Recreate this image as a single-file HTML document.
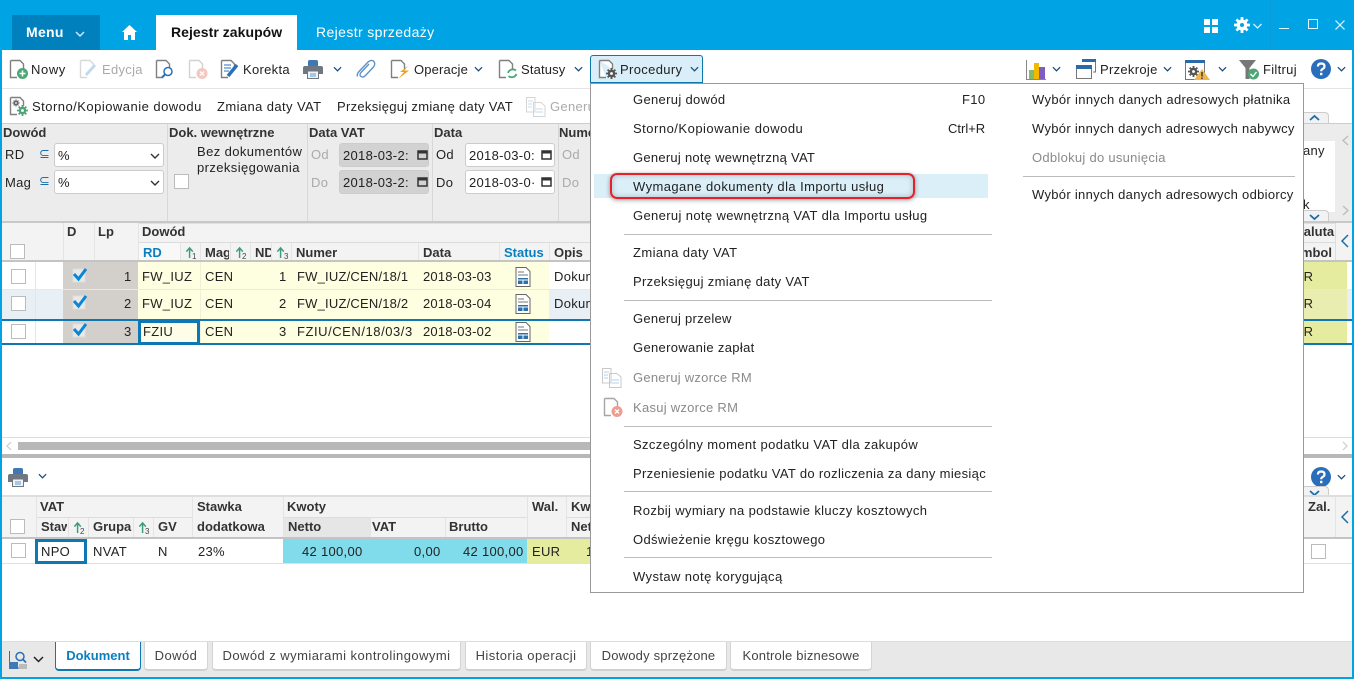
<!DOCTYPE html>
<html lang="pl"><head><meta charset="utf-8"><title>Rejestr zakupów</title>
<style>
html,body{margin:0;padding:0;width:1354px;height:679px;overflow:hidden;background:#fff}
body{position:relative;font:13px/16px "Liberation Sans",Arial,sans-serif;color:#222;letter-spacing:.3px}
.t{position:absolute;white-space:nowrap;font-style:normal;margin-top:1px}
.b{font-weight:bold;font-size:13px;color:#333;letter-spacing:0;margin-top:0}
.d{font-size:8px;line-height:8px;color:#444;letter-spacing:0;margin-top:0}
.g{color:#aaa}
.r{position:absolute;display:block}
.cb{position:absolute;width:13px;height:13px;border:1px solid #bbb;background:#fff}
svg{position:absolute;overflow:visible}
.sel{position:absolute;background:#fff;border:1px solid #ccc;border-radius:3px;box-sizing:border-box;width:110px;height:24px;padding:4px 3px;font-size:13px}
.date{position:absolute;border:1px solid #ccc;border-radius:3px;box-sizing:border-box;width:90px;height:24px;padding:4px 3px;overflow:hidden;white-space:nowrap;background:#fff}
.tab{position:absolute;top:642px;height:27px;background:#fff;border:1px solid #d4d4d4;border-top:0;border-bottom:2px solid #d0d0d0;border-radius:0 0 4px 4px;text-align:center;line-height:28px;color:#444;letter-spacing:.45px}
#menu .t{color:#222;letter-spacing:.33px}
#menu .sep{position:absolute;height:1px;background:#bbb}
.le{position:absolute;color:#1c6ea8;font-family:"DejaVu Sans",sans-serif;font-size:13px;letter-spacing:0}
</style></head><body>
<svg width="0" height="0" style="position:absolute"><defs>
<symbol id="doc" viewBox="0 0 20 20"><path d="M1.500 1.500H11L14.500 5V10M8 18.500H1.500V1.500" fill="#fff" stroke="#808080" stroke-width="1.400"/></symbol>
<symbol id="gear" viewBox="0 0 10 10"><path d="M5 0V10M0 5H10M1.500 1.500L8.500 8.500M8.500 1.500L1.500 8.500" stroke="currentColor" stroke-width="1.700"/><circle cx="5" cy="5" r="3.400" fill="currentColor"/><circle cx="5" cy="5" r="1.300" fill="#fff"/></symbol>
<symbol id="chev" viewBox="0 0 10 6"><path d="M1 1L5 5L9 1" fill="none" stroke="#1c4f80" stroke-width="1.400"/></symbol>
<symbol id="sort" viewBox="0 0 12 14"><path d="M5 13V3M1.500 6L5 2L8.500 6" fill="none" stroke="#3e9d76" stroke-width="1.600"/></symbol>
<symbol id="stat" viewBox="0 0 16 20"><path d="M1 .5H11L15 4.500V19.500H1Z" fill="#fff" stroke="#666"/><path d="M3 5H9M3 8H13" stroke="#777"/><path d="M3 11H13V17H3Z" fill="#2d6fa8"/><path d="M3 13H13M8 13V17" stroke="#fff"/></symbol>
<symbol id="check" viewBox="0 0 16 16"><path d="M1 2H13V15H1Z" fill="#e9e9e9" stroke="#ddd"/><path d="M2 7L6.500 12L14 2" fill="none" stroke="#0a86d6" stroke-width="3"/></symbol>
<symbol id="print" viewBox="0 0 20 20"><path d="M5 8V2.500Q5 1 7 1H13Q15 1 15 2.500V8Z" fill="#3f78b5"/><path d="M2 7H18Q20 7 20 9V15H16V13H4V15H0V9Q0 7 2 7Z" fill="#6f7880"/><path d="M4.500 12H15.500V19.500H4.500Z" fill="#eef4fa" stroke="#6f7880"/><path d="M7 15H13M7 17H13" stroke="#5d9bd0"/></symbol>
<symbol id="help" viewBox="0 0 20 20"><circle cx="10" cy="10" r="10" fill="#2a6ebb"/><path d="M6.800 7.500Q7 4.500 10.200 4.500Q13.500 4.600 13.500 7.200Q13.500 9 11.500 10Q10.200 10.800 10.200 12.300" fill="none" stroke="#fff" stroke-width="2.200"/><rect x="9" y="13.800" width="2.400" height="2.400" fill="#fff"/></symbol>
</defs></svg>

<!-- header -->
<div class="r" style="left:0;top:0;width:1354px;height:50px;background:#00a4e4"></div>
<div class="r" style="left:0;top:0;width:2px;height:679px;background:#00a4e4;z-index:9"></div>
<div class="r" style="left:1352px;top:0;width:2px;height:679px;background:#00a4e4;z-index:9"></div>
<div class="r" style="left:0;top:677px;width:1354px;height:2px;background:#00a4e4;z-index:9"></div>
<div class="r" style="left:12px;top:15px;width:88px;height:35px;background:#0080bd"></div>
<i class="t" style="left:26px;top:23px;color:#fff;font-weight:bold;font-size:14px">Menu</i>
<svg style="left:75px;top:31px" width="10" height="6"><path d="M1 1L5 5L9 1" fill="none" stroke="#cfe8f5" stroke-width="1.500"/></svg>
<svg style="left:122px;top:25px" width="15" height="15"><path d="M7.500 0L15 7H13V15H9V10H6V15H2V7H0Z" fill="#fff"/></svg>
<div class="r" style="left:156px;top:15px;width:141px;height:35px;background:#fff"></div>
<i class="t" style="left:171px;top:23px;font-weight:bold;font-size:14px;color:#111;letter-spacing:.05px">Rejestr zakupów</i>
<i class="t" style="left:316px;top:23px;color:#fff;font-size:14px;letter-spacing:.38px">Rejestr sprzedaży</i>
<svg style="left:1204px;top:19px" width="14" height="14"><path d="M0 0H6V6H0ZM8 0H14V6H8ZM0 8H6V14H0ZM8 8H14V14H8Z" fill="#fff"/></svg>
<svg style="left:1234px;top:17px;color:#fff" width="16" height="16"><use href="#gear" width="16" height="16"/><circle cx="8" cy="8" r="2" fill="#00a4e4"/></svg>
<svg style="left:1253px;top:23px" width="9" height="6"><path d="M.5 1L4.500 5L8.500 1" fill="none" stroke="#d5eefa" stroke-width="1.300"/></svg>
<div class="r" style="left:1270px;top:0;width:1px;height:50px;background:#0a9ad6"></div>
<div class="r" style="left:1279px;top:28px;width:10px;height:1px;background:#e6f6fd"></div>
<div class="r" style="left:1308px;top:19px;width:8px;height:8px;border:1px solid #e6f6fd"></div>
<svg style="left:1335px;top:20px" width="10" height="10"><path d="M.5 .5L9.500 9.500M9.500 .5L.5 9.500" stroke="#e6f6fd" stroke-width="1.200"/></svg>

<!-- toolbar 1 -->
<div class="r" style="left:2px;top:88px;width:1350px;height:1px;background:#e4e4e4"></div>
<svg style="left:9px;top:59px" width="20" height="20"><use href="#doc" width="20" height="20"/><circle cx="13.500" cy="14.500" r="5.500" fill="#4ea677"/><path d="M13.500 11.500V17.500M10.500 14.500H16.500" stroke="#fff" stroke-width="1.500"/></svg>
<i class="t" style="left:31px;top:61px;letter-spacing:.6px">Nowy</i>
<svg style="left:79px;top:59px;opacity:.3" width="20" height="20"><use href="#doc" width="20" height="20"/><path d="M7 16L16 6" stroke="#3f85c8" stroke-width="3"/></svg>
<i class="t g" style="left:102px;top:61px">Edycja</i>
<svg style="left:155px;top:59px" width="20" height="20"><use href="#doc" width="20" height="20"/><circle cx="13" cy="12.500" r="4" fill="#fff" stroke="#2a70b8" stroke-width="1.500"/><path d="M10 15.500L7 18.500" stroke="#2a70b8" stroke-width="2"/></svg>
<svg style="left:188px;top:59px;opacity:.35" width="20" height="20"><use href="#doc" width="20" height="20"/><circle cx="14" cy="14.500" r="5.500" fill="#e2604e"/><path d="M12 12.500L16 16.500M16 12.500L12 16.500" stroke="#fff" stroke-width="1.300"/></svg>
<svg style="left:220px;top:59px" width="20" height="20"><use href="#doc" width="20" height="20"/><path d="M4 6H11M4 9H11M4 12H9" stroke="#2a70b8"/><path d="M8 17L17 6" stroke="#2a70b8" stroke-width="3.400"/></svg>
<i class="t" style="left:243px;top:61px">Korekta</i>
<svg style="left:303px;top:59px" width="20" height="20"><use href="#print" width="20" height="20"/></svg>
<svg style="left:333px;top:66px" width="9" height="6"><use href="#chev" width="9" height="6"/></svg>
<svg style="left:356px;top:59px" width="20" height="20" viewBox="0 0 20 20"><path d="M13 5L5 13.500Q3 16 5 17.500Q7 19 9.500 16.500L17.500 8Q20 4.500 17.500 2Q15 .5 12 3L3 12.500Q.5 15.500 1.500 17.500" fill="none" stroke="#5c93c9" stroke-width="1.400"/></svg>
<svg style="left:390px;top:59px" width="20" height="20"><use href="#doc" width="20" height="20"/><path d="M18 7L10 13H14L8 20L19 11.500H14.500Z" fill="#f0a020"/></svg>
<i class="t" style="left:414px;top:61px;letter-spacing:.15px">Operacje</i>
<svg style="left:474px;top:66px" width="9" height="6"><use href="#chev" width="9" height="6"/></svg>
<svg style="left:498px;top:59px" width="20" height="20"><use href="#doc" width="20" height="20"/><path d="M10 14A5 5 0 0 1 18 11.500M18.500 15A5 5 0 0 1 10.500 17" fill="none" stroke="#4ea677" stroke-width="1.800"/></svg>
<i class="t" style="left:521px;top:61px;letter-spacing:.15px">Statusy</i>
<svg style="left:574px;top:66px" width="9" height="6"><use href="#chev" width="9" height="6"/></svg>
<div class="r" style="left:590px;top:55px;width:111px;height:26px;background:#d9eef8;border:1px solid #0d78ac;border-radius:3px 3px 0 0;z-index:6"></div>
<svg style="left:598px;top:59px;z-index:7;color:#555" width="20" height="20"><use href="#doc" width="20" height="20"/><use href="#gear" x="8" y="9" width="11" height="11"/></svg>
<i class="t" style="left:620px;top:61px;z-index:7;letter-spacing:.35px">Procedury</i>
<svg style="left:690px;top:66px;z-index:7" width="9" height="6"><use href="#chev" width="9" height="6"/></svg>

<svg style="left:1026px;top:60px" width="20" height="20"><path d="M.5 0V19.500H20" fill="none" stroke="#888"/><path d="M3 10H8V19H3Z" fill="#7fbc6d"/><path d="M8 3H13V19H8Z" fill="#f5b800"/><path d="M13 7H19V19H13Z" fill="#7d5cc4"/></svg>
<svg style="left:1052px;top:66px" width="9" height="6"><use href="#chev" width="9" height="6"/></svg>
<svg style="left:1076px;top:59px" width="20" height="20"><path d="M6 .5H19.500V13H17" fill="#fff" stroke="#777"/><path d="M6 0H20V3H6Z" fill="#2a6aa8"/><path d="M.5 6.500H15.500V19.500H.5Z" fill="#fff" stroke="#777"/><path d="M0 6H16V10H0Z" fill="#2a6aa8"/></svg>
<i class="t" style="left:1100px;top:61px">Przekroje</i>
<svg style="left:1163px;top:66px" width="9" height="6"><use href="#chev" width="9" height="6"/></svg>
<svg style="left:1185px;top:60px;color:#555" width="25" height="21"><path d="M.5 .5H19.500V19.500H.5Z" fill="#fff" stroke="#777"/><path d="M0 0H20V3H0Z" fill="#2a6aa8"/><use href="#gear" x="3" y="6" width="11" height="11"/><path d="M17 9L25 20H9Z" fill="#f0b64c"/><path d="M17 12V16.500M17 17.500V19" stroke="#333" stroke-width="1.400"/></svg>
<svg style="left:1218px;top:66px" width="9" height="6"><use href="#chev" width="9" height="6"/></svg>
<svg style="left:1239px;top:60px" width="21" height="20"><path d="M0 0H17L10.500 8V19H6.500V8Z" fill="#777"/><circle cx="14.500" cy="14" r="5.500" fill="#4ea677"/><path d="M11.500 14L14 16.500L17.500 12" fill="none" stroke="#fff" stroke-width="1.400"/></svg>
<i class="t" style="left:1263px;top:61px">Filtruj</i>
<svg style="left:1311px;top:59px" width="20" height="20"><use href="#help" width="20" height="20"/></svg>
<svg style="left:1337px;top:66px" width="9" height="6"><use href="#chev" width="9" height="6"/></svg>

<!-- toolbar 2 -->
<svg style="left:9px;top:96px" width="20" height="20"><use href="#doc" width="20" height="20"/><use href="#gear" x="3.500" y="3.500" width="7" height="7" style="color:#666"/><use href="#gear" x="8" y="9" width="11" height="11" style="color:#4ea677"/></svg>
<i class="t" style="left:32px;top:98px;letter-spacing:.48px">Storno/Kopiowanie dowodu</i>
<i class="t" style="left:217px;top:98px;letter-spacing:.4px">Zmiana daty VAT</i>
<i class="t" style="left:337px;top:98px">Przeksięguj zmianę daty VAT</i>
<svg style="left:526px;top:97px;opacity:.35" width="20" height="20"><path d="M.5 .5H9V15H.5ZM7.500 5.500H15L19 9V19.500H7.500Z" fill="#fff" stroke="#888"/><path d="M2 4H7M2 7H6M2 10H6M10 12H17M10 15H17" stroke="#5d9bd0"/></svg>
<i class="t g" style="left:550px;top:98px">Generuj</i>

<!-- filter panel -->
<div class="r" style="left:2px;top:123px;width:1350px;height:99px;background:#ececec;border-top:1px solid #ccc;box-sizing:border-box"></div>
<div class="r" style="left:2px;top:221px;width:1350px;height:2px;background:#c8c8c8"></div>
<div class="r" style="left:167px;top:124px;width:1px;height:97px;background:#d8d8d8"></div>
<div class="r" style="left:307px;top:124px;width:1px;height:97px;background:#d8d8d8"></div>
<div class="r" style="left:432px;top:124px;width:1px;height:97px;background:#d8d8d8"></div>
<div class="r" style="left:558px;top:124px;width:1px;height:97px;background:#d8d8d8"></div>
<i class="t b" style="left:3px;top:125px">Dowód</i>
<i class="t b" style="left:169px;top:125px">Dok. wewnętrzne</i>
<i class="t b" style="left:309px;top:125px">Data VAT</i>
<i class="t b" style="left:434px;top:125px">Data</i>
<i class="t b" style="left:559px;top:125px">Numer</i>
<i class="t" style="left:5px;top:146px">RD</i><i class="t le" style="left:39px;top:146px">⊆</i>
<i class="t" style="left:5px;top:174px">Mag</i><i class="t le" style="left:39px;top:173px">⊆</i>
<div class="sel" style="left:54px;top:143px">%</div><div class="sel" style="left:54px;top:170px">%</div>
<svg style="left:150px;top:153px" width="10" height="6"><path d="M1 1L5 5L9 1" fill="none" stroke="#333" stroke-width="1.400"/></svg>
<svg style="left:150px;top:180px" width="10" height="6"><path d="M1 1L5 5L9 1" fill="none" stroke="#333" stroke-width="1.400"/></svg>
<i class="t" style="left:197px;top:143px;letter-spacing:.4px">Bez dokumentów</i><i class="t" style="left:197px;top:159px;letter-spacing:.4px">przeksięgowania</i>
<div class="cb" style="left:174px;top:174px"></div>
<i class="t g" style="left:311px;top:146px">Od</i><i class="t g" style="left:311px;top:174px">Do</i>
<div class="date" style="left:339px;top:143px;background:#d2d2d2">2018-03-2:</div>
<div class="date" style="left:339px;top:170px;background:#d2d2d2">2018-03-2:</div>
<i class="t" style="left:436px;top:146px">Od</i><i class="t" style="left:436px;top:174px">Do</i>
<div class="date" style="left:465px;top:143px">2018-03-0:</div>
<div class="date" style="left:465px;top:170px">2018-03-0·</div>
<svg style="left:417px;top:149px" width="11" height="11"><path d="M1 2H10V10H1Z" fill="none" stroke="#333" stroke-width="1.500"/><path d="M1 3.500H10" stroke="#333" stroke-width="2"/></svg>
<svg style="left:417px;top:176px" width="11" height="11"><path d="M1 2H10V10H1Z" fill="none" stroke="#333" stroke-width="1.500"/><path d="M1 3.500H10" stroke="#333" stroke-width="2"/></svg>
<svg style="left:541px;top:149px" width="11" height="11"><path d="M1 2H10V10H1Z" fill="none" stroke="#333" stroke-width="1.500"/><path d="M1 3.500H10" stroke="#333" stroke-width="2"/></svg>
<svg style="left:541px;top:176px" width="11" height="11"><path d="M1 2H10V10H1Z" fill="none" stroke="#333" stroke-width="1.500"/><path d="M1 3.500H10" stroke="#333" stroke-width="2"/></svg>
<i class="t g" style="left:562px;top:146px">Od</i><i class="t g" style="left:562px;top:174px">Do</i>

<!-- right side panel -->
<div class="r" style="left:1303px;top:112px;width:26px;height:11px;background:#f2f2f2;border:1px solid #ccc;border-bottom:0;border-radius:0 4px 0 0;box-sizing:border-box"></div>
<svg style="left:1309px;top:115px" width="11" height="6"><path d="M1 5L5.500 1L10 5" fill="none" stroke="#1c6ea8" stroke-width="1.800"/></svg>
<div class="r" style="left:1303px;top:141px;width:32px;height:71px;background:#fff"></div>
<div class="r" style="left:1335px;top:130px;width:17px;height:91px;background:#ececec"></div>
<svg style="left:1342px;top:135px" width="7" height="11"><path d="M6 1L1 5.500L6 10" fill="none" stroke="#bbb" stroke-width="1.300"/></svg>
<svg style="left:1342px;top:205px" width="7" height="11"><path d="M1 1L6 5.500L1 10" fill="none" stroke="#bbb" stroke-width="1.300"/></svg>
<i class="t" style="left:1303px;top:142px">any</i><i class="t" style="left:1303px;top:196px">k</i>
<div class="r" style="left:1303px;top:210px;width:26px;height:11px;background:#f2f2f2;border:1px solid #ccc;border-bottom:0;border-radius:0 4px 0 0;box-sizing:border-box"></div>
<svg style="left:1309px;top:214px" width="11" height="6"><path d="M1 1L5.500 5L10 1" fill="none" stroke="#1c6ea8" stroke-width="1.800"/></svg>

<!-- top grid -->
<div class="r" style="left:2px;top:223px;width:1350px;height:37px;background:#f3f3f3"></div>
<div class="r" style="left:138px;top:223px;width:1197px;height:1px;background:#e0e0e0"></div>
<div class="r" style="left:138px;top:242px;width:1197px;height:1px;background:#dcdcdc"></div>
<div class="r" style="left:2px;top:260px;width:1350px;height:2px;background:#c4c4c4"></div>
<div class="r" style="left:138px;top:243px;width:42px;height:17px;background:#f8f8f8"></div>
<div class="r" style="left:63px;top:223px;width:1px;height:37px;background:#e4e4e4"></div>
<div class="r" style="left:94px;top:223px;width:1px;height:37px;background:#e4e4e4"></div>
<div class="r" style="left:138px;top:223px;width:1px;height:37px;background:#e4e4e4"></div>
<div class="r" style="left:180px;top:243px;width:1px;height:17px;background:#e4e4e4"></div>
<div class="r" style="left:200px;top:243px;width:1px;height:17px;background:#e4e4e4"></div>
<div class="r" style="left:230px;top:243px;width:1px;height:17px;background:#e4e4e4"></div>
<div class="r" style="left:250px;top:243px;width:1px;height:17px;background:#e4e4e4"></div>
<div class="r" style="left:271px;top:243px;width:1px;height:17px;background:#e4e4e4"></div>
<div class="r" style="left:291px;top:243px;width:1px;height:17px;background:#e4e4e4"></div>
<div class="r" style="left:418px;top:243px;width:1px;height:17px;background:#e4e4e4"></div>
<div class="r" style="left:499px;top:243px;width:1px;height:17px;background:#e4e4e4"></div>
<div class="r" style="left:549px;top:243px;width:1px;height:17px;background:#e4e4e4"></div>
<div class="cb" style="left:10px;top:244px"></div>
<i class="t b" style="left:67px;top:224px">D</i><i class="t b" style="left:98px;top:224px">Lp</i><i class="t b" style="left:142px;top:224px">Dowód</i>
<i class="t b" style="left:143px;top:245px;color:#0a7fc0">RD</i>
<i class="t b" style="left:205px;top:245px;width:24px;overflow:hidden">Mag</i>
<i class="t b" style="left:255px;top:245px;width:16px;overflow:hidden">ND</i>
<i class="t b" style="left:296px;top:245px">Numer</i><i class="t b" style="left:423px;top:245px">Data</i>
<i class="t b" style="left:504px;top:245px;color:#0a7fc0">Status</i><i class="t b" style="left:554px;top:245px">Opis</i>
<svg style="left:185px;top:246px" width="11" height="13"><use href="#sort" width="11" height="13"/></svg>
<svg style="left:235px;top:246px" width="11" height="13"><use href="#sort" width="11" height="13"/></svg>
<svg style="left:276px;top:246px" width="11" height="13"><use href="#sort" width="11" height="13"/></svg>
<i class="t d" style="left:192px;top:253px">1</i><i class="t d" style="left:242px;top:253px">2</i><i class="t d" style="left:284px;top:253px">3</i>

<!-- rows -->
<div class="r" style="left:2px;top:290px;width:1350px;height:29px;background:#e9f0f5"></div>
<div class="r" style="left:63px;top:262px;width:75px;height:83px;background:#d3d0cb"></div>
<div class="r" style="left:138px;top:262px;width:411px;height:83px;background:#fefee0"></div>
<div class="r" style="left:1303px;top:262px;width:44px;height:83px;background:#e6ec9f"></div>
<div class="r" style="left:1303px;top:290px;width:44px;height:29px;background:#e9eeb0"></div>
<div class="r" style="left:2px;top:289px;width:1350px;height:1px;background:#e8e8e8"></div>
<div class="r" style="left:35px;top:262px;width:1px;height:83px;background:#dbe9f5"></div>
<div class="r" style="left:200px;top:262px;width:1px;height:83px;background:#f0f0d8"></div>
<div class="r" style="left:2px;top:319px;width:1350px;height:2px;background:#0d78b4"></div>
<div class="r" style="left:2px;top:343px;width:1350px;height:2px;background:#0d78b4"></div>
<div class="r" style="left:138px;top:320px;width:62px;height:25px;border:3px solid #0d78b4;box-sizing:border-box;background:#fefee8"></div>
<div class="cb" style="left:11px;top:269px"></div><div class="cb" style="left:11px;top:296px"></div><div class="cb" style="left:11px;top:324px"></div>
<svg style="left:72px;top:267px" width="16" height="16"><use href="#check" width="16" height="16"/></svg>
<svg style="left:72px;top:294px" width="16" height="16"><use href="#check" width="16" height="16"/></svg>
<svg style="left:72px;top:322px" width="16" height="16"><use href="#check" width="16" height="16"/></svg>
<i class="t" style="left:124px;top:268px">1</i><i class="t" style="left:124px;top:295px">2</i><i class="t" style="left:124px;top:323px">3</i>
<i class="t" style="left:142px;top:268px">FW_IUZ</i><i class="t" style="left:142px;top:295px">FW_IUZ</i><i class="t" style="left:143px;top:323px">FZIU</i>
<i class="t" style="left:205px;top:268px">CEN</i><i class="t" style="left:205px;top:295px">CEN</i><i class="t" style="left:205px;top:323px">CEN</i>
<i class="t" style="left:279px;top:268px">1</i><i class="t" style="left:279px;top:295px">2</i><i class="t" style="left:279px;top:323px">3</i>
<i class="t" style="left:297px;top:268px;letter-spacing:.2px">FW_IUZ/CEN/18/1</i><i class="t" style="left:297px;top:295px;letter-spacing:.2px">FW_IUZ/CEN/18/2</i><i class="t" style="left:297px;top:323px;letter-spacing:.55px">FZIU/CEN/18/03/3</i>
<i class="t" style="left:423px;top:268px;letter-spacing:.2px">2018-03-03</i><i class="t" style="left:423px;top:295px;letter-spacing:.2px">2018-03-04</i><i class="t" style="left:423px;top:323px;letter-spacing:.2px">2018-03-02</i>
<svg style="left:515px;top:267px" width="16" height="20"><use href="#stat" width="16" height="20"/></svg>
<svg style="left:515px;top:294px" width="16" height="20"><use href="#stat" width="16" height="20"/></svg>
<svg style="left:515px;top:322px" width="16" height="20"><use href="#stat" width="16" height="20"/></svg>
<i class="t" style="left:554px;top:268px">Dokument</i><i class="t" style="left:554px;top:295px">Dokument</i>
<i class="t b" style="left:1292px;top:224px">Waluta</i><i class="t b" style="left:1285px;top:245px">Symbol</i>
<i class="t" style="left:1285px;top:268px">EUR</i><i class="t" style="left:1285px;top:295px">EUR</i><i class="t" style="left:1285px;top:323px">EUR</i>
<div class="r" style="left:1335px;top:223px;width:17px;height:37px;background:#f3f3f3;border-left:1px solid #ddd;box-sizing:border-box"></div>
<svg style="left:1341px;top:234px" width="8" height="14"><path d="M7 1L1 7L7 13" fill="none" stroke="#1c6ea8" stroke-width="1.500"/></svg>

<!-- scrollbar + splitter -->
<div class="r" style="left:2px;top:437px;width:1350px;height:1px;background:#ddd"></div>
<svg style="left:6px;top:441px" width="6" height="10"><path d="M5 1L1 5L5 9" fill="none" stroke="#ccc" stroke-width="1.200"/></svg>
<div class="r" style="left:18px;top:442px;width:600px;height:8px;background:#b8b8b8"></div>
<svg style="left:1342px;top:441px" width="6" height="10"><path d="M1 1L5 5L1 9" fill="none" stroke="#ccc" stroke-width="1.200"/></svg>
<div class="r" style="left:2px;top:454px;width:1350px;height:4px;background:#b8b8b8"></div>
<svg style="left:8px;top:467px" width="20" height="20"><use href="#print" width="20" height="20"/></svg>
<svg style="left:38px;top:473px" width="9" height="6"><use href="#chev" width="9" height="6"/></svg>
<svg style="left:1311px;top:467px" width="20" height="20"><use href="#help" width="20" height="20"/></svg>
<svg style="left:1337px;top:474px" width="9" height="6"><use href="#chev" width="9" height="6"/></svg>
<div class="r" style="left:1303px;top:486px;width:26px;height:11px;background:#f2f2f2;border:1px solid #ccc;border-bottom:0;border-radius:0 4px 0 0;box-sizing:border-box"></div>
<svg style="left:1309px;top:490px" width="11" height="6"><path d="M1 1L5.500 5L10 1" fill="none" stroke="#1c6ea8" stroke-width="1.800"/></svg>

<!-- lower grid -->
<div class="r" style="left:2px;top:495px;width:1350px;height:2px;background:#dedede"></div>
<div class="r" style="left:2px;top:497px;width:1350px;height:40px;background:#f3f3f3"></div>
<div class="r" style="left:283px;top:518px;width:87px;height:19px;background:#e6e6e6"></div>
<div class="r" style="left:36px;top:517px;width:156px;height:1px;background:#ddd"></div>
<div class="r" style="left:283px;top:517px;width:244px;height:1px;background:#ddd"></div>
<div class="r" style="left:566px;top:517px;width:40px;height:1px;background:#ddd"></div>
<div class="r" style="left:2px;top:537px;width:1350px;height:2px;background:#c4c4c4"></div>
<div class="r" style="left:36px;top:497px;width:1px;height:40px;background:#e4e4e4"></div>
<div class="r" style="left:192px;top:497px;width:1px;height:40px;background:#e4e4e4"></div>
<div class="r" style="left:283px;top:497px;width:1px;height:40px;background:#e4e4e4"></div>
<div class="r" style="left:527px;top:497px;width:1px;height:40px;background:#e4e4e4"></div>
<div class="r" style="left:566px;top:497px;width:1px;height:40px;background:#e4e4e4"></div>
<div class="r" style="left:68px;top:518px;width:1px;height:19px;background:#e4e4e4"></div>
<div class="r" style="left:88px;top:518px;width:1px;height:19px;background:#e4e4e4"></div>
<div class="r" style="left:133px;top:518px;width:1px;height:19px;background:#e4e4e4"></div>
<div class="r" style="left:153px;top:518px;width:1px;height:19px;background:#e4e4e4"></div>
<div class="r" style="left:370px;top:518px;width:1px;height:19px;background:#e4e4e4"></div>
<div class="r" style="left:445px;top:518px;width:1px;height:19px;background:#e4e4e4"></div>
<div class="r" style="left:1335px;top:497px;width:1px;height:40px;background:#e4e4e4"></div>
<div class="cb" style="left:10px;top:519px"></div>
<i class="t b" style="left:40px;top:499px">VAT</i><i class="t b" style="left:197px;top:499px">Stawka</i><i class="t b" style="left:287px;top:499px">Kwoty</i><i class="t b" style="left:532px;top:499px">Wal.</i><i class="t b" style="left:571px;top:499px">Kwoty</i><i class="t b" style="left:1308px;top:499px">Zal.</i>
<i class="t b" style="left:41px;top:519px;width:26px;overflow:hidden">Stawka</i><i class="t b" style="left:93px;top:519px">Grupa</i><i class="t b" style="left:158px;top:519px">GV</i><i class="t b" style="left:197px;top:519px">dodatkowa</i><i class="t b" style="left:288px;top:519px">Netto</i><i class="t b" style="left:372px;top:519px">VAT</i><i class="t b" style="left:449px;top:519px">Brutto</i><i class="t b" style="left:571px;top:519px">Netto</i>
<svg style="left:73px;top:521px" width="11" height="13"><use href="#sort" width="11" height="13"/></svg>
<svg style="left:138px;top:521px" width="11" height="13"><use href="#sort" width="11" height="13"/></svg>
<i class="t d" style="left:80px;top:528px">2</i><i class="t d" style="left:145px;top:528px">3</i>
<svg style="left:1341px;top:510px" width="8" height="14"><path d="M7 1L1 7L7 13" fill="none" stroke="#1c6ea8" stroke-width="1.500"/></svg>
<div class="r" style="left:283px;top:539px;width:244px;height:25px;background:#80dcea"></div>
<div class="r" style="left:527px;top:539px;width:64px;height:25px;background:#e6ec9f"></div>
<div class="r" style="left:2px;top:563px;width:1350px;height:1px;background:#e0e0e0"></div>
<div class="r" style="left:35px;top:539px;width:52px;height:25px;border:3px solid #0d78b4;box-sizing:border-box;background:#fff"></div>
<div class="cb" style="left:11px;top:543px"></div><div class="cb" style="left:1311px;top:544px"></div>
<i class="t" style="left:41px;top:543px">NPO</i><i class="t" style="left:93px;top:543px">NVAT</i><i class="t" style="left:158px;top:543px">N</i><i class="t" style="left:198px;top:543px">23%</i>
<i class="t" style="left:302px;top:543px">42 100,00</i><i class="t" style="left:414px;top:543px">0,00</i><i class="t" style="left:463px;top:543px">42 100,00</i><i class="t" style="left:532px;top:543px">EUR</i><i class="t" style="left:586px;top:543px">1</i>

<!-- bottom -->
<div class="r" style="left:2px;top:641px;width:1350px;height:36px;background:#e8e8e8;border-top:1px solid #ddd;box-sizing:border-box"></div>
<svg style="left:9px;top:651px" width="19" height="18"><path d="M.5 0V17H18" fill="none" stroke="#2a70b8"/><path d="M0 11H9V18H0Z" fill="#3f78b5"/><path d="M10 13H18V18H10Z" fill="#bbb"/><circle cx="11" cy="5.500" r="4" fill="none" stroke="#2a70b8" stroke-width="1.500"/><path d="M14 8.500L17 11.500" stroke="#2a70b8" stroke-width="1.800"/></svg>
<svg style="left:33px;top:656px" width="11" height="7"><path d="M1 1L5.500 5.500L10 1" fill="none" stroke="#222" stroke-width="1.500"/></svg>
<div class="tab" style="left:55px;width:84px;border-color:#0d78b4;color:#0a7fc0;font-weight:bold;letter-spacing:0">Dokument</div>
<div class="tab" style="left:144px;width:62px">Dowód</div>
<div class="tab" style="left:212px;width:247px">Dowód z wymiarami kontrolingowymi</div>
<div class="tab" style="left:465px;width:120px">Historia operacji</div>
<div class="tab" style="left:590px;width:135px;letter-spacing:.2px">Dowody sprzężone</div>
<div class="tab" style="left:730px;width:140px;letter-spacing:.2px">Kontrole biznesowe</div>

<!-- dropdown -->
<div id="menu" class="r" style="left:590px;top:83px;width:714px;height:510px;background:#fff;border:1px solid #999;box-sizing:border-box;z-index:5">
<div class="r" style="left:3px;top:90px;width:394px;height:24px;background:#daeff8"></div>
<div class="r" style="left:19px;top:89px;width:305px;height:26px;border:2px solid #e8202a;border-radius:7px;box-sizing:border-box;box-shadow:0 1px 5px rgba(0,0,0,.4), inset 0 0 6px rgba(0,0,0,.22)"></div>
<i class="t" style="left:42px;top:7px">Generuj dowód</i><i class="t" style="left:371px;top:7px">F10</i>
<i class="t" style="left:42px;top:36px;letter-spacing:.5px">Storno/Kopiowanie dowodu</i><i class="t" style="left:357px;top:36px;letter-spacing:0 !important">Ctrl+R</i>
<i class="t" style="left:42px;top:65px;letter-spacing:.26px">Generuj notę wewnętrzną VAT</i>
<i class="t" style="left:42px;top:94px;letter-spacing:.42px">Wymagane dokumenty dla Importu usług</i>
<i class="t" style="left:42px;top:123px;letter-spacing:.36px">Generuj notę wewnętrzną VAT dla Importu usług</i>
<div class="sep" style="left:33px;top:150px;width:368px"></div>
<i class="t" style="left:42px;top:160px;letter-spacing:.4px">Zmiana daty VAT</i>
<i class="t" style="left:42px;top:189px">Przeksięguj zmianę daty VAT</i>
<div class="sep" style="left:33px;top:216px;width:368px"></div>
<i class="t" style="left:42px;top:226px;letter-spacing:.27px">Generuj przelew</i>
<i class="t" style="left:42px;top:255px">Generowanie zapłat</i>
<svg style="left:11px;top:284px;opacity:.45" width="20" height="20"><path d="M.5 .5H9V15H.5ZM7.500 5.500H15L19 9V19.500H7.500Z" fill="#fff" stroke="#888"/><path d="M2 4H7M2 7H6M2 10H6M10 12H17M10 15H17" stroke="#5d9bd0"/></svg>
<i class="t" style="left:42px;top:285px;color:#8a8a8a;letter-spacing:.24px">Generuj wzorce RM</i>
<svg style="left:12px;top:313px;opacity:.7" width="20" height="20"><use href="#doc" width="20" height="20"/><circle cx="14" cy="14.500" r="5.500" fill="#e87560"/><path d="M12 12.500L16 16.500M16 12.500L12 16.500" stroke="#fff" stroke-width="1.300"/></svg>
<i class="t" style="left:42px;top:315px;color:#8a8a8a;letter-spacing:.27px">Kasuj wzorce RM</i>
<div class="sep" style="left:33px;top:342px;width:368px"></div>
<i class="t" style="left:42px;top:352px;letter-spacing:.38px">Szczególny moment podatku VAT dla zakupów</i>
<i class="t" style="left:42px;top:381px">Przeniesienie podatku VAT do rozliczenia za dany miesiąc</i>
<div class="sep" style="left:33px;top:407px;width:368px"></div>
<i class="t" style="left:42px;top:418px;letter-spacing:.36px">Rozbij wymiary na podstawie kluczy kosztowych</i>
<i class="t" style="left:42px;top:447px;letter-spacing:.34px">Odświeżenie kręgu kosztowego</i>
<div class="sep" style="left:33px;top:473px;width:368px"></div>
<i class="t" style="left:42px;top:484px;letter-spacing:.4px">Wystaw notę korygującą</i>
<i class="t" style="left:441px;top:7px">Wybór innych danych adresowych płatnika</i>
<i class="t" style="left:441px;top:36px;letter-spacing:.3px">Wybór innych danych adresowych nabywcy</i>
<i class="t" style="left:441px;top:65px;color:#8a8a8a;letter-spacing:.28px">Odblokuj do usunięcia</i>
<div class="sep" style="left:432px;top:92px;width:272px"></div>
<i class="t" style="left:441px;top:102px;letter-spacing:.3px">Wybór innych danych adresowych odbiorcy</i>
</div>
</body></html>
